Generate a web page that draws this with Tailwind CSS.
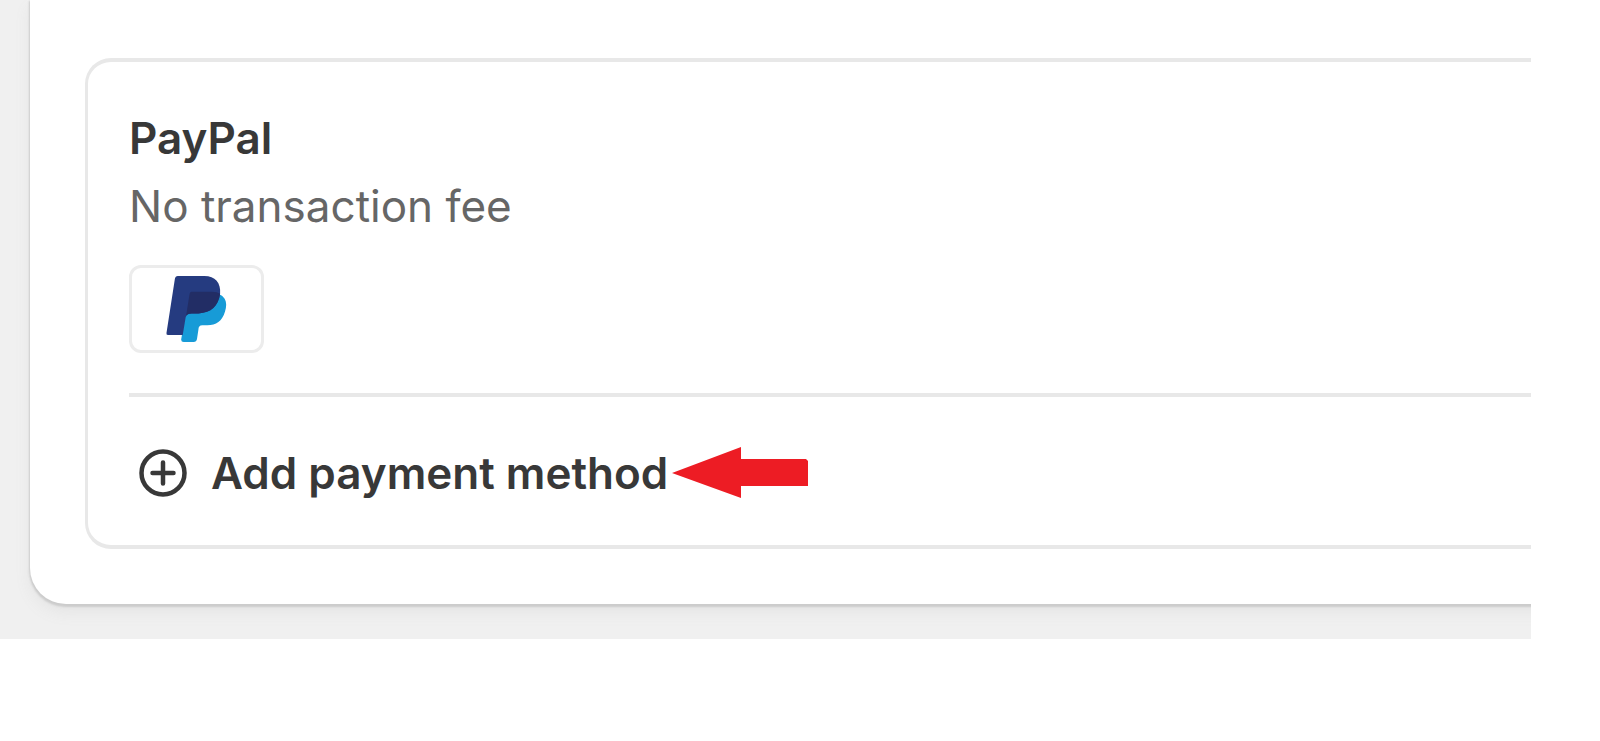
<!DOCTYPE html>
<html lang="en">
<head>
    <meta charset="UTF-8">
    <meta name="viewport" content="width=device-width, initial-scale=1.0">
    <title>Payments</title>
    <script src="https://cdn.jsdelivr.net/npm/@tailwindcss/browser@4"></script>
</head>
<body class="bg-white font-['Inter',sans-serif] text-[44px] leading-[68px] text-[#383838]">
    <main class="mr-[69px] bg-[#f0f0f0] pl-[30px] pb-[35px] overflow-hidden">
        <section class="-mr-6 bg-white rounded-bl-[36px] pt-[58px] pl-[55px] pb-[55px] shadow-[0_2px_2px_1px_#cccccc,0_8px_16px_0_#e4e4e4]">
            <div class="border-y-4 border-l-3 border-[#e8e8e8] rounded-l-[26px] pt-[42px] pl-[41px] pb-[38px]">
                <h2 class="font-semibold">PayPal</h2>
                <p class="text-[#666666]">No transaction fee</p>
                <div class="mt-[25px] w-[135px] h-[88px] flex items-center justify-center border-3 border-[#ececec] rounded-xl">
                    <svg class="w-[61px] h-[66px]" viewBox="0 0 62 67" role="img" aria-label="PayPal">
                        <path d="M55 19C61 22 62.500 28 60 36C57 46 51 50 42 50H37C34 50 33 52 33 54L31.500 64Q31 67 28 67H18Q15 67 15.500 64L21 32Z" fill="#179bd7"/>
                        <path d="M12 0H39C50 0 56 7 55 18C53 31 46 37 33 38H26Q21 38 20 42L17 60H2Q0 60 .5 58L9 3Q9.500 0 12 0Z" fill="#253b80"/>
                        <path d="M26 16H47Q52 16 55 18C53 31 46 37 33 38H26Q22 38 20.500 40L24 18Q24.500 16 26 16Z" fill="#222d65"/>
                    </svg>
                </div>
                <div class="mt-10 border-t-4 border-[#e8e8e8] pt-[42px] pl-[10px] flex items-center gap-1">
                    <button type="button" class="flex items-center gap-6 font-semibold">
                        <svg class="size-12" viewBox="0 0 48 48" fill="none" stroke="currentColor" stroke-width="4.500" stroke-linecap="round" aria-hidden="true">
                            <circle cx="24" cy="24" r="21.500"/>
                            <path d="M24 13.500V34.500M13.500 24H34.500"/>
                        </svg>
                        Add payment method
                    </button>
                    <!-- pointer arrow -->
                    <svg class="w-[136px] h-[52px]" viewBox="0 0 136 52" aria-hidden="true">
                        <path d="M0 26L69 0V12H134L136 14V39H69V51Z" fill="#ed1c24"/>
                    </svg>
                </div>
            </div>
        </section>
    </main>
</body>
</html>
